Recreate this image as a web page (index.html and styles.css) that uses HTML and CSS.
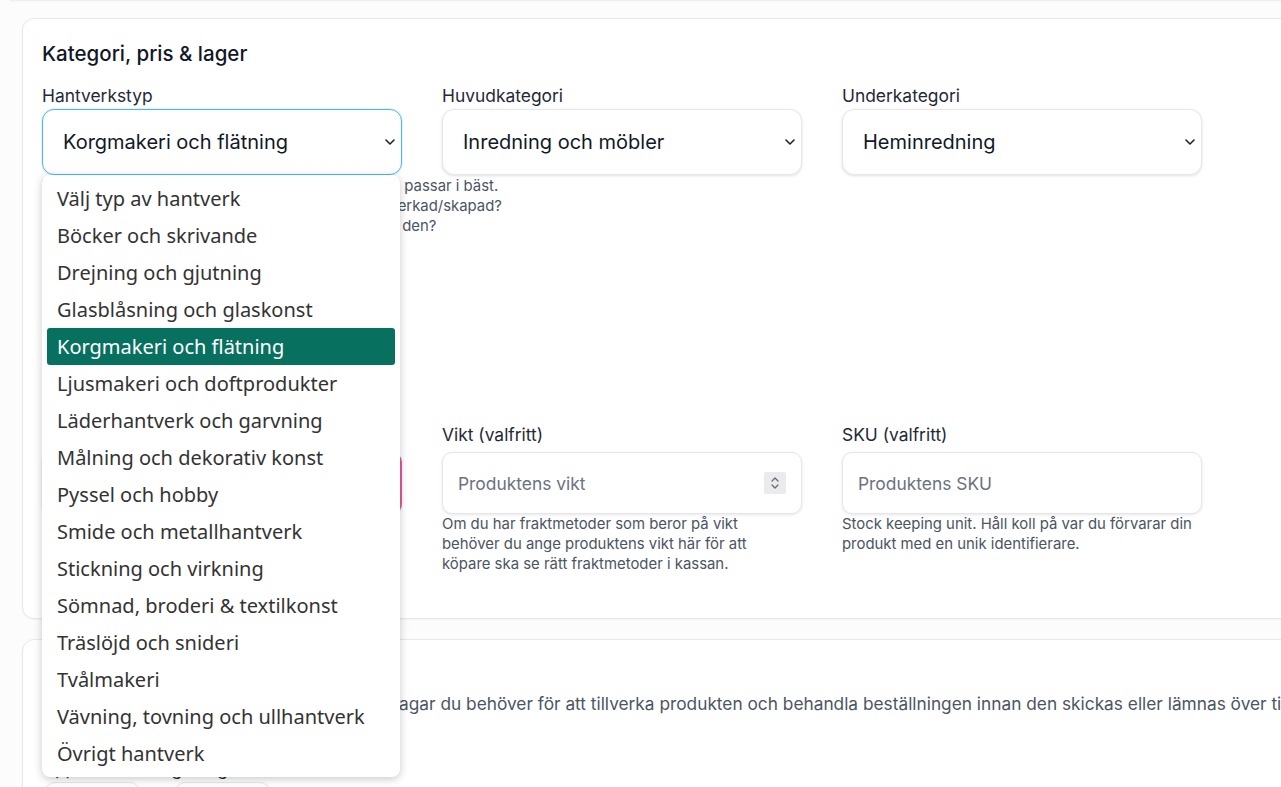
FILE: index.html
```html
<!DOCTYPE html>
<html lang="sv">
<head>
    <meta charset="UTF-8">
    <meta name="viewport" content="width=device-width, initial-scale=1.0">
    <title>Ny produkt</title>
    <link rel="stylesheet" href="styles.css">
</head>
<body>

    <div class="page">
        <div class="card-end"></div>

        <section class="card">
            <h2 class="card-title">Kategori, pris &amp; lager</h2>

            <div class="row">
                <div class="field">
                    <label class="label">Hantverkstyp</label>
                    <div class="select-wrap">
                        <div class="select is-open">
                            <span>Korgmakeri och flätning</span>
                            <svg class="chevron" width="12" height="8" viewBox="0 0 12 8"><path d="M2 2l4 4 4-4" fill="none" stroke="#222" stroke-width="1.6" stroke-linecap="round" stroke-linejoin="round"/></svg>
                        </div>
                        <ul class="dropdown">
                            <li>Välj typ av hantverk</li>
                            <li>Böcker och skrivande</li>
                            <li>Drejning och gjutning</li>
                            <li>Glasblåsning och glaskonst</li>
                            <li class="selected">Korgmakeri och flätning</li>
                            <li>Ljusmakeri och doftprodukter</li>
                            <li>Läderhantverk och garvning</li>
                            <li>Målning och dekorativ konst</li>
                            <li>Pyssel och hobby</li>
                            <li>Smide och metallhantverk</li>
                            <li>Stickning och virkning</li>
                            <li>Sömnad, broderi &amp; textilkonst</li>
                            <li>Träslöjd och snideri</li>
                            <li>Tvålmakeri</li>
                            <li>Vävning, tovning och ullhantverk</li>
                            <li>Övrigt hantverk</li>
                        </ul>
                    </div>
                </div>
                <div class="field">
                    <label class="label">Huvudkategori</label>
                    <div class="select">
                        <span>Inredning och möbler</span>
                        <svg class="chevron" width="12" height="8" viewBox="0 0 12 8"><path d="M2 2l4 4 4-4" fill="none" stroke="#222" stroke-width="1.6" stroke-linecap="round" stroke-linejoin="round"/></svg>
                    </div>
                </div>
                <div class="field">
                    <label class="label">Underkategori</label>
                    <div class="select">
                        <span>Heminredning</span>
                        <svg class="chevron" width="12" height="8" viewBox="0 0 12 8"><path d="M2 2l4 4 4-4" fill="none" stroke="#222" stroke-width="1.6" stroke-linecap="round" stroke-linejoin="round"/></svg>
                    </div>
                </div>
            </div>

            <p class="help help-wide">
                Välj den typ av hantverk som du tycker din produkt passar i bäst.<br>
                Med vilka tekniker eller metoder är din produkt tillverkad/skapad?<br>
                Vilket hantverk använde du mest när du tillverkade den?
            </p>

            <div class="row row-second">
                <div class="field">
                    <label class="label">Pris</label>
                    <div class="input is-invalid">
                        <input type="text" placeholder="Produktens pris">
                    </div>
                    <p class="help">Ange ett pris för produkten.</p>
                </div>
                <div class="field">
                    <label class="label">Vikt (valfritt)</label>
                    <div class="input">
                        <input type="text" placeholder="Produktens vikt">
                        <span class="spin">
                            <svg width="10" height="14" viewBox="0 0 10 14"><path d="M2 5l3-3 3 3M2 9l3 3 3-3" fill="none" stroke="#666" stroke-width="1.2" stroke-linecap="round" stroke-linejoin="round"/></svg>
                        </span>
                    </div>
                    <p class="help">Om du har fraktmetoder som beror på vikt behöver du ange produktens vikt här för att köpare ska se rätt fraktmetoder i kassan.</p>
                </div>
                <div class="field">
                    <label class="label">SKU (valfritt)</label>
                    <div class="input">
                        <input type="text" placeholder="Produktens SKU">
                    </div>
                    <p class="help">Stock keeping unit. Håll koll på var du förvarar din produkt med en unik identifierare.</p>
                </div>
            </div>
        </section>

        <section class="card card-second">
            <h2 class="card-title">Handläggningstid</h2>
            <p class="lead">Handläggningstid är det totala antal arbetsdagar du behöver för att tillverka produkten och behandla beställningen innan den skickas eller lämnas över till köparen.</p>
            <p class="label sub-label">Upp till hur många dagar brukar det ta?</p>
            <div class="pills">
                <span class="pill"></span>
                <span class="pill"></span>
            </div>
        </section>
    </div>

</body>
</html>
```

FILE: styles.css
```css
* {
    margin: 0;
    padding: 0;
    box-sizing: border-box;
}

body {
    font-family: Inter, 'Liberation Sans', sans-serif;
    background: #fcfcfd;
    color: #1f2937;
    overflow: hidden;
    height: 100vh;
}

.page {
    width: 1320px;
    padding-left: 22px;
}

.card-end {
    height: 1px;
    margin-left: -12px;
    margin-bottom: 17px;
    border-bottom: 1px solid #eceef1;
    box-shadow: 0 1px 2px rgba(0, 0, 0, 0.04);
}

.card {
    background: #fff;
    border: 1px solid #e6e8eb;
    border-radius: 12px;
    padding: 21px 19px 44px;
    box-shadow: 0 1px 2px rgba(0, 0, 0, 0.04);
}

.card-second {
    margin-top: 20px;
    padding-bottom: 20px;
}

.card-title {
    font-size: 20.5px;
    line-height: 28px;
    font-weight: 500;
    color: #111827;
    margin-bottom: 16px;
}

.row {
    display: grid;
    grid-template-columns: 360px 360px 360px;
    gap: 40px;
}

.row-second {
    margin-top: 187px;
}

.row-second .label {
    margin-bottom: 5px;
}

.label {
    display: block;
    font-size: 17.4px;
    line-height: 24px;
    color: #1f2937;
    margin-bottom: 1px;
}

.select-wrap {
    position: relative;
}

.select {
    height: 66px;
    display: flex;
    align-items: center;
    justify-content: space-between;
    padding: 0 5px 0 20px;
    border: 1px solid #e5e7eb;
    border-radius: 12px;
    background: #fff;
    box-shadow: 0 1px 3px rgba(0, 0, 0, 0.12);
    font-size: 20px;
    color: #111827;
}

.select.is-open {
    border-color: #4cb8e8;
    box-shadow: 0 0 0 1px rgba(76, 184, 232, 0.15);
}

.chevron {
    flex-shrink: 0;
}

.dropdown {
    position: absolute;
    top: 100%;
    left: 0;
    width: 358px;
    list-style: none;
    padding: 5px 0;
    background: #fff;
    border-radius: 8px;
    box-shadow: 0 2px 8px rgba(0, 0, 0, 0.22);
    z-index: 10;
}

.dropdown li {
    height: 37px;
    line-height: 37px;
    margin: 0 5px;
    padding: 0 10px;
    font-family: 'Noto Sans', 'Open Sans', sans-serif;
    font-size: 20px;
    color: #333;
    white-space: nowrap;
}

.dropdown li.selected {
    background: #08705f;
    color: #fff;
    border-radius: 3px;
}

.help {
    font-size: 14.9px;
    line-height: 20px;
    color: #4b5563;
    padding-right: 6px;
}

.help-wide {
    margin-top: 1px;
    padding-right: 0;
}

.input {
    height: 62px;
    display: flex;
    align-items: center;
    padding: 0 15px 0 15px;
    border: 1px solid #e5e7eb;
    border-radius: 10px;
    background: #fff;
    box-shadow: 0 1px 3px rgba(0, 0, 0, 0.1);
}

.input.is-invalid {
    border: 2px solid #e25a9e;
}

.input input {
    flex: 1;
    min-width: 0;
    border: none;
    outline: none;
    background: transparent;
    font-family: inherit;
    font-size: 17.4px;
    color: #111827;
}

.input input::placeholder {
    color: #6b7280;
}

.spin {
    width: 22px;
    height: 22px;
    display: flex;
    align-items: center;
    justify-content: center;
    background: #ebebef;
    border-radius: 2px;
}

.lead {
    font-size: 17.3px;
    line-height: 24px;
    color: #4b5563;
    white-space: nowrap;
    margin-top: -13px;
}

.sub-label {
    margin-top: 41px;
}

.pills {
    display: flex;
    gap: 35px;
    padding-left: 3px;
    margin-top: 1px;
}

.pill {
    width: 95px;
    height: 44px;
    border: 1px solid #e5e7eb;
    border-radius: 10px;
    box-shadow: 0 1px 3px rgba(0, 0, 0, 0.1);
}
```
